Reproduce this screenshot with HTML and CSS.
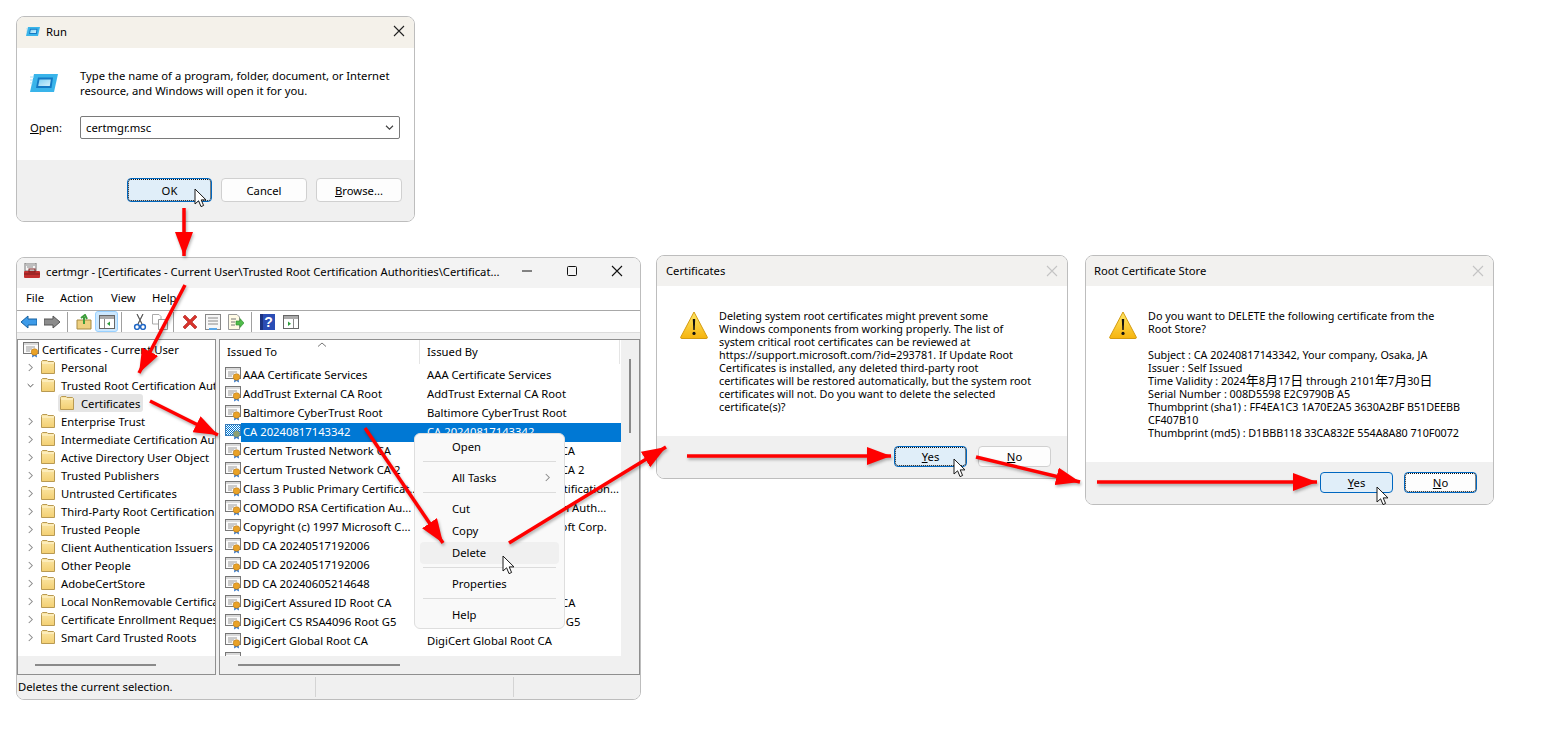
FILE: index.html
```html
<!DOCTYPE html>
<html lang="en">
<head>
<meta charset="utf-8">
<title>Deleting a root certificate</title>
<link rel="stylesheet" href="styles.css">
</head>
<body>
<svg class="defs" width="0" height="0" aria-hidden="true">
  <defs>
    <linearGradient id="folderFill" x1="0" y1="0" x2="0" y2="1"><stop offset="0" stop-color="#fbe7a6"/><stop offset="1" stop-color="#f3cf72"/></linearGradient>
    <linearGradient id="warnFill" x1="0" y1="0" x2="0" y2="1"><stop offset="0" stop-color="#ffe766"/><stop offset="1" stop-color="#f6b40e"/></linearGradient>
    <linearGradient id="runInner" x1="0" y1="0" x2="1" y2="1"><stop offset="0" stop-color="#7fd0f4"/><stop offset="1" stop-color="#d4f0fb"/></linearGradient>
    <symbol id="folder" viewBox="0 0 14 14">
      <path d="M.5 2.5V1.5L1.5.5H6L7 1.5H12.5L13.5 2.5V13.5H.5Z" fill="url(#folderFill)" stroke="#b99a52"/>
      <path d="M1 3H13" stroke="#fff6d8"/>
    </symbol>
    <symbol id="cert" viewBox="0 0 17 17">
      <rect x=".5" y="1.5" width="15" height="11" fill="#fbfbfb" stroke="#777"/>
      <rect x="1" y="2" width="14" height="2" fill="#d9d9d9"/>
      <path d="M3 6H12M3 8H9M3 10H7" stroke="#9a9a9a"/>
      <path d="M9.5 13L9 16.5L11.5 15L14 16.5L13.5 13Z" fill="#2f74c9"/>
      <circle cx="11.5" cy="11" r="3.3" fill="#e9a227" stroke="#b9791a" stroke-width=".6"/>
    </symbol>
    <pattern id="dither" width="2" height="2" patternUnits="userSpaceOnUse"><rect width="2" height="2" fill="#fff"/><rect width="1" height="1" fill="#0078d4"/><rect x="1" y="1" width="1" height="1" fill="#0078d4"/></pattern>
    <symbol id="certSel" viewBox="0 0 17 17">
      <rect x=".5" y="1.5" width="15" height="11" fill="url(#dither)" stroke="#3a7cb8"/>
      <path d="M9.5 13L9 16.5L11.5 15L14 16.5L13.5 13Z" fill="#2f74c9"/>
      <circle cx="11.5" cy="11" r="3.3" fill="#8ea070" stroke="#4a80a0" stroke-width=".6"/>
    </symbol>
    <symbol id="chev" viewBox="0 0 8 10"><path d="M2 1L6 5L2 9" fill="none" stroke="#8a8a8a" stroke-width="1.2"/></symbol>
    <symbol id="chevDown" viewBox="0 0 10 8"><path d="M1 2L5 6L9 2" fill="none" stroke="#404040" stroke-width="1.3"/></symbol>
    <symbol id="runIcon" viewBox="0 0 28 18">
      <path d="M4 0H28L24 18H0Z" fill="#39b4ea"/>
      <path d="M8 3.5H23L21.5 14H6Z" fill="#1379c4"/>
      <path d="M9.5 5.5H20.8L19.8 12H8.2Z" fill="url(#runInner)"/>
      <path d="M0 3H4M0 6H3M0 9H2.5" stroke="#a9def5"/>
    </symbol>
    <symbol id="warn" viewBox="0 0 28 28">
      <path d="M14 1L27.3 26.2Q27.6 27.5 26 27.5H2Q.4 27.5 .7 26.2Z" fill="url(#warnFill)" stroke="#d49b10"/>
      <path d="M12.8 8H15.2L14.7 19H13.3Z" fill="#111"/><circle cx="14" cy="22.4" r="1.6" fill="#111"/>
    </symbol>
    <symbol id="pointer" viewBox="0 0 13 20">
      <path d="M1 1V16L4.6 12.8L7 18.6L9.6 17.5L7.2 11.9H12Z" fill="#fff" stroke="#1a1a1a" stroke-width="1" stroke-linejoin="round"/>
    </symbol>
    <symbol id="x" viewBox="0 0 12 12"><path d="M1 1L11 11M11 1L1 11" fill="none" stroke="currentColor" stroke-width="1.1"/></symbol>
    <marker id="head" viewBox="0 0 24 18" refX="24" refY="9" markerUnits="userSpaceOnUse" markerWidth="24" markerHeight="18" orient="auto"><path d="M0 0L24 9L0 18Z" fill="#f00"/></marker>
  </defs>
</svg>

<main class="desktop">

  <section class="win win-run">
    <header class="title title-run">
      <svg class="title-icon-run"><use href="#runIcon"/></svg>
      <span class="title-text">Run</span>
      <svg class="close close-dark"><use href="#x"/></svg>
    </header>
    <div class="run-body">
      <div class="run-msg">
        <svg class="run-icon"><use href="#runIcon"/></svg>
        <p class="run-text">Type the name of a program, folder, document, or Internet<br>resource, and Windows will open it for you.</p>
      </div>
      <div class="run-open">
        <span class="run-label"><u>O</u>pen:</span>
        <div class="combo"><span>certmgr.msc</span><svg class="combo-arrow"><use href="#chevDown"/></svg></div>
      </div>
    </div>
    <footer class="foot foot-run">
      <button class="btn btn-run btn-focus">OK</button>
      <button class="btn btn-run">Cancel</button>
      <button class="btn btn-run"><u>B</u>rowse...</button>
    </footer>
  </section>

  <section class="win win-mmc">
    <header class="title title-mmc">
      <svg class="mmc-icon" viewBox="0 0 16 16">
        <rect x="1" y="0" width="11" height="8" fill="#f4f4f4" stroke="#777"/><path d="M2 2H11M3 4H9" stroke="#888"/>
        <rect x="0" y="8" width="16" height="7" rx="1" fill="#c22f2f"/><rect x="5" y="6" width="6" height="3" fill="none" stroke="#7a1f1f"/><path d="M0 11H16" stroke="#7a1f1f"/>
      </svg>
      <span class="title-text title-grow">certmgr - [Certificates - Current User\Trusted Root Certification Authorities\Certificat...</span>
      <span class="caption">
        <svg class="cap-btn" viewBox="0 0 12 12"><path d="M1 6H11" stroke="#111"/></svg>
        <svg class="cap-btn" viewBox="0 0 12 12"><rect x="1.5" y="1.5" width="9" height="9" rx="1" fill="none" stroke="#111"/></svg>
        <svg class="cap-btn"><use href="#x"/></svg>
      </span>
    </header>
    <nav class="menu"><span>File</span><span>Action</span><span>View</span><span>Help</span></nav>
    <div class="toolbar">
      <svg class="tb" viewBox="0 0 16 16"><path d="M0 8L7 2V5H16V11H7V14Z" fill="#3d9be9" stroke="#17609f"/></svg>
      <svg class="tb" viewBox="0 0 16 16"><path d="M16 8L9 2V5H0V11H9V14Z" fill="#8c8c8c" stroke="#555"/></svg>
      <i class="tb-sep"></i>
      <svg class="tb" viewBox="0 0 16 16"><path d="M1 6H15V15H1Z" fill="#eed080" stroke="#a88b43"/><path d="M8 10V3M5 4L9 1L11 5" fill="none" stroke="#3d9c3a" stroke-width="2"/></svg>
      <span class="tb-active"><svg class="tb-in" viewBox="0 0 16 16"><rect x=".5" y="1.5" width="15" height="13" fill="#fff" stroke="#666"/><rect x="1" y="2" width="14" height="3" fill="#aaa"/><path d="M5.5 5V14" stroke="#888"/><path d="M11 7.5V12L8 9.7Z" fill="#2e9c3c"/></svg></span>
      <i class="tb-sep"></i>
      <svg class="tb tb-cut" viewBox="0 0 16 16"><path d="M11 0L6 10M5 0L10 10" stroke="#555" fill="none" stroke-width="1.2"/><circle cx="5" cy="13" r="2.4" fill="none" stroke="#1f66c4" stroke-width="1.5"/><circle cx="11" cy="13" r="2.4" fill="none" stroke="#1f66c4" stroke-width="1.5"/></svg>
      <svg class="tb tb-copy" viewBox="0 0 16 16"><path d="M.5.5H7L9 2.5V10H.5Z" fill="#fff" stroke="#aaa"/><path d="M6.5 5.5H13L15.5 8V15.5H6.5Z" fill="#fff" stroke="#999"/></svg>
      <i class="tb-sep"></i>
      <svg class="tb tb-del" viewBox="0 0 16 16"><path d="M1 3L3 1L8 6L13 1L15 3L10 8L15 13L13 15L8 10L3 15L1 13L6 8Z" fill="#d8322b" stroke="#a82520" stroke-width=".6"/></svg>
      <svg class="tb tb-props" viewBox="0 0 16 16"><rect x=".5" y=".5" width="15" height="15" fill="#f7f7f7" stroke="#888"/><path d="M3 4H13M3 7H13M3 10H13" stroke="#888"/><path d="M4 15H12" stroke="#5aa7e8" stroke-width="2"/></svg>
      <svg class="tb tb-export" viewBox="0 0 16 16"><path d="M.5.5H9L11.5 3V15.5H.5Z" fill="#fffbe6" stroke="#999"/><path d="M3 5H8M3 8H7M3 11H7" stroke="#777"/><path d="M8 7H12V4.5L16 9L12 13.5V11H8Z" fill="#4fbb4a" stroke="#2b8c2b" stroke-width=".6"/></svg>
      <i class="tb-sep"></i>
      <svg class="tb tb-help" viewBox="0 0 16 16"><rect width="15" height="16" fill="#2a4db5"/><rect x="0" width="3" height="16" fill="#1c3380"/><text x="8.5" y="13" class="tb-q">?</text></svg>
      <svg class="tb tb-view" viewBox="0 0 16 16"><rect x=".5" y="1.5" width="15" height="13" fill="#fff" stroke="#666"/><rect x="1" y="2" width="14" height="3" fill="#aaa"/><path d="M10.5 5V14" stroke="#888"/><path d="M5 7.5V12L8 9.7Z" fill="#2e9c3c"/></svg>
    </div>
    <div class="panes">
      <div class="pane pane-tree">
        <div class="tree">
          <div class="row-t row-root"><svg class="cert-ico"><use href="#cert"/></svg><span>Certificates - Current User</span></div>
          <div class="row-t"><svg class="ex"><use href="#chev"/></svg><svg class="fo"><use href="#folder"/></svg><span>Personal</span></div>
          <div class="row-t"><svg class="ex"><use href="#chevDown"/></svg><svg class="fo"><use href="#folder"/></svg><span>Trusted Root Certification Authorities</span></div>
          <div class="row-t row-sub"><span class="row-sel"><svg class="fo"><use href="#folder"/></svg><span>Certificates</span></span></div>
          <div class="row-t"><svg class="ex"><use href="#chev"/></svg><svg class="fo"><use href="#folder"/></svg><span>Enterprise Trust</span></div>
          <div class="row-t"><svg class="ex"><use href="#chev"/></svg><svg class="fo"><use href="#folder"/></svg><span>Intermediate Certification Authorities</span></div>
          <div class="row-t"><svg class="ex"><use href="#chev"/></svg><svg class="fo"><use href="#folder"/></svg><span>Active Directory User Object</span></div>
          <div class="row-t"><svg class="ex"><use href="#chev"/></svg><svg class="fo"><use href="#folder"/></svg><span>Trusted Publishers</span></div>
          <div class="row-t"><svg class="ex"><use href="#chev"/></svg><svg class="fo"><use href="#folder"/></svg><span>Untrusted Certificates</span></div>
          <div class="row-t"><svg class="ex"><use href="#chev"/></svg><svg class="fo"><use href="#folder"/></svg><span>Third-Party Root Certification Authorities</span></div>
          <div class="row-t"><svg class="ex"><use href="#chev"/></svg><svg class="fo"><use href="#folder"/></svg><span>Trusted People</span></div>
          <div class="row-t"><svg class="ex"><use href="#chev"/></svg><svg class="fo"><use href="#folder"/></svg><span>Client Authentication Issuers</span></div>
          <div class="row-t"><svg class="ex"><use href="#chev"/></svg><svg class="fo"><use href="#folder"/></svg><span>Other People</span></div>
          <div class="row-t"><svg class="ex"><use href="#chev"/></svg><svg class="fo"><use href="#folder"/></svg><span>AdobeCertStore</span></div>
          <div class="row-t"><svg class="ex"><use href="#chev"/></svg><svg class="fo"><use href="#folder"/></svg><span>Local NonRemovable Certificates</span></div>
          <div class="row-t"><svg class="ex"><use href="#chev"/></svg><svg class="fo"><use href="#folder"/></svg><span>Certificate Enrollment Requests</span></div>
          <div class="row-t"><svg class="ex"><use href="#chev"/></svg><svg class="fo"><use href="#folder"/></svg><span>Smart Card Trusted Roots</span></div>
        </div>
        <div class="hscroll"><i class="thumb thumb-tree"></i></div>
      </div>
      <div class="pane pane-list">
        <div class="list-main">
          <div class="list-area">
            <div class="list-head"><span class="col-a">Issued To</span><span class="col-b">Issued By</span><svg class="sort" viewBox="0 0 10 5"><path d="M1 4.5L5 1L9 4.5" fill="none" stroke="#777"/></svg></div>
            <div class="rows">
              <div class="row-l"><svg class="ci"><use href="#cert"/></svg><span class="c1">AAA Certificate Services</span><span class="c2">AAA Certificate Services</span></div>
              <div class="row-l"><svg class="ci"><use href="#cert"/></svg><span class="c1">AddTrust External CA Root</span><span class="c2">AddTrust External CA Root</span></div>
              <div class="row-l"><svg class="ci"><use href="#cert"/></svg><span class="c1">Baltimore CyberTrust Root</span><span class="c2">Baltimore CyberTrust Root</span></div>
              <div class="row-l row-on"><svg class="ci"><use href="#certSel"/></svg><span class="c1">CA 20240817143342</span><span class="c2">CA 20240817143342</span></div>
              <div class="row-l"><svg class="ci"><use href="#cert"/></svg><span class="c1">Certum Trusted Network CA</span><span class="c2">Certum Trusted Network CA</span></div>
              <div class="row-l"><svg class="ci"><use href="#cert"/></svg><span class="c1">Certum Trusted Network CA 2</span><span class="c2">Certum Trusted Network CA 2</span></div>
              <div class="row-l"><svg class="ci"><use href="#cert"/></svg><span class="c1">Class 3 Public Primary Certificat...</span><span class="c2">Class 3 Public Primary Certification...</span></div>
              <div class="row-l"><svg class="ci"><use href="#cert"/></svg><span class="c1">COMODO RSA Certification Au...</span><span class="c2">COMODO RSA Certification Auth...</span></div>
              <div class="row-l"><svg class="ci"><use href="#cert"/></svg><span class="c1">Copyright (c) 1997 Microsoft C...</span><span class="c2">Copyright (c) 1997 Microsoft Corp.</span></div>
              <div class="row-l"><svg class="ci"><use href="#cert"/></svg><span class="c1">DD CA 20240517192006</span><span class="c2">DD CA 20240517192006</span></div>
              <div class="row-l"><svg class="ci"><use href="#cert"/></svg><span class="c1">DD CA 20240517192006</span><span class="c2">DD CA 20240517192006</span></div>
              <div class="row-l"><svg class="ci"><use href="#cert"/></svg><span class="c1">DD CA 20240605214648</span><span class="c2">DD CA 20240605214648</span></div>
              <div class="row-l"><svg class="ci"><use href="#cert"/></svg><span class="c1">DigiCert Assured ID Root CA</span><span class="c2">DigiCert Assured ID Root CA</span></div>
              <div class="row-l"><svg class="ci"><use href="#cert"/></svg><span class="c1">DigiCert CS RSA4096 Root G5</span><span class="c2">DigiCert CS RSA4096 Root G5</span></div>
              <div class="row-l"><svg class="ci"><use href="#cert"/></svg><span class="c1">DigiCert Global Root CA</span><span class="c2">DigiCert Global Root CA</span></div>
              <div class="row-l"><svg class="ci"><use href="#cert"/></svg><span class="c1">DigiCert Global Root G2</span><span class="c2">DigiCert Global Root G2</span></div>
            </div>
          </div>
          <div class="vscroll"><i class="thumb-v"></i></div>
        </div>
        <div class="hscroll"><i class="thumb thumb-list"></i></div>
      </div>
    </div>
    <footer class="status"><span class="st st1">Deletes the current selection.</span><span class="st st2"></span><span class="st st3"></span></footer>
  </section>

  <div class="ctx" role="menu">
    <div class="ctx-item">Open</div>
    <hr class="ctx-sep">
    <div class="ctx-item ctx-sub">All Tasks<svg class="ctx-chev"><use href="#chev"/></svg></div>
    <hr class="ctx-sep">
    <div class="ctx-item ctx-mid">Cut</div>
    <div class="ctx-item ctx-mid">Copy</div>
    <div class="ctx-item ctx-mid ctx-hover">Delete</div>
    <hr class="ctx-sep">
    <div class="ctx-item">Properties</div>
    <hr class="ctx-sep">
    <div class="ctx-item">Help</div>
  </div>

  <section class="win win-cert">
    <header class="title title-dlg"><span class="title-text">Certificates</span><svg class="close close-off"><use href="#x"/></svg></header>
    <div class="dlg-body">
      <svg class="warn"><use href="#warn"/></svg>
      <p class="dlg-text">Deleting system root certificates might prevent some<br>Windows components from working properly. The list of<br>system critical root certificates can be reviewed at<br>https://support.microsoft.com/?id=293781. If Update Root<br>Certificates is installed, any deleted third-party root<br>certificates will be restored automatically, but the system root<br>certificates will not. Do you want to delete the selected<br>certificate(s)?</p>
    </div>
    <footer class="foot foot-dlg">
      <button class="btn btn-dlg btn-focus"><u>Y</u>es</button>
      <button class="btn btn-dlg"><u>N</u>o</button>
    </footer>
  </section>

  <section class="win win-root">
    <header class="title title-dlg title-root"><span class="title-text">Root Certificate Store</span><svg class="close close-off"><use href="#x"/></svg></header>
    <div class="dlg-body">
      <svg class="warn"><use href="#warn"/></svg>
      <p class="dlg-text">Do you want to DELETE the following certificate from the<br>Root Store?<br><br>Subject : CA 20240817143342, Your company, Osaka, JA<br>Issuer : Self Issued<br>Time Validity : 2024<span class="cjk">年</span>8<span class="cjk">月</span>17<span class="cjk">日</span> through 2101<span class="cjk">年</span>7<span class="cjk">月</span>30<span class="cjk">日</span><br>Serial Number : 008D5598 E2C9790B A5<br><span class="hash">Thumbprint (sha1) : FF4EA1C3 1A70E2A5 3630A2BF B51DEEBB</span><br>CF407B10<br><span class="hash">Thumbprint (md5) : D1BBB118 33CA832E 554A8A80 710F0072</span></p>
    </div>
    <footer class="foot foot-dlg foot-root">
      <button class="btn btn-dlg btn-blue"><u>Y</u>es</button>
      <button class="btn btn-dlg btn-dotted"><u>N</u>o</button>
    </footer>
  </section>

  <svg class="arrows" viewBox="0 0 1553 729" aria-hidden="true">
    <g class="arrow-lines">
      <path d="M184 208V256"/>
      <path d="M185 285L139 373"/>
      <path d="M150 401L218 435"/>
      <path d="M365 428L443 543"/>
      <path d="M509 543L666 447"/>
      <path d="M687 456H891"/>
      <path d="M976 457L1080 482"/>
      <path d="M1097 482H1317"/>
    </g>
    <use href="#pointer" x="194" y="188" width="13" height="20"/>
    <use href="#pointer" x="502" y="555" width="13" height="20"/>
    <use href="#pointer" x="953" y="458" width="13" height="20"/>
    <use href="#pointer" x="1376" y="486" width="13" height="20"/>
  </svg>
</main>
</body>
</html>
```
FILE: styles.css
```css
* { box-sizing: border-box; }
html, body { margin: 0; background: #fff; }
body {
  font-family: "Noto Sans", "Noto Sans CJK JP", sans-serif;
  font-size: 11.25px;
  color: #000;
}
.defs { position: absolute; }
.desktop { position: relative; width: 1553px; height: 729px; overflow: hidden; }
p { margin: 0; }

/* windows on the canvas */
.win {
  position: absolute;
  display: flex;
  flex-direction: column;
  background: #fff;
  border: 1px solid #bdbdbd;
  border-radius: 8px;
  overflow: hidden;
}
.win-run { left: 16px; top: 16px; width: 399px; height: 206px; }
.win-mmc { left: 16px; top: 257px; width: 625px; height: 443px; }
.win-cert { left: 656px; top: 255px; width: 412px; height: 224px; }
.win-root { left: 1085px; top: 255px; width: 409px; height: 250px; }

/* title bars */
.title { display: flex; align-items: center; flex: none; }
.title-text { white-space: nowrap; }
.title-run { height: 31px; background: #f4f1ea; padding: 0 9px 3px 9px; }
.title-icon-run { width: 14px; height: 9px; margin-right: 6px; }
.title-run .title-text { flex: 1; }
.close { width: 12px; height: 12px; }
.close-dark { color: #222; }
.close-off { color: #c4c4c4; margin-left: auto; }
.title-dlg { height: 30px; background: #f2f1ef; padding: 0 9px 1px; }
.title-root { padding-left: 8px; }
.title-dlg .title-text { flex: 1; }
.title-mmc { height: 30px; background: #f3f3f3; padding: 0 17px 4px 7px; }
.mmc-icon { width: 16px; height: 16px; margin-right: 6px; flex: none; }
.title-grow { flex: 1; overflow: hidden; }
.caption { display: flex; gap: 33px; align-items: center; }
.cap-btn { width: 12px; height: 12px; color: #111; }

/* run dialog */
.run-body { flex: 1; padding: 19px 14px 0 13px; }
.run-msg { display: flex; align-items: flex-start; height: 49px; }
.run-icon { width: 28px; height: 18px; margin: 7px 22px 0 0; flex: none; }
.run-text { line-height: 15px; padding-top: 1px; }
.run-open { display: flex; align-items: center; }
.run-label { width: 50px; }
.combo {
  display: flex; align-items: center; justify-content: space-between;
  flex: 1; height: 23px; padding: 0 5px;
  border: 1px solid #7a7a7a; border-radius: 2px;
}
.combo-arrow { width: 9px; height: 7px; }
.foot { display: flex; justify-content: flex-end; background: #f0f0f0; flex: none; }
.foot-run { height: 61px; gap: 9px; padding: 18px 12px 0 0; }
.btn {
  font: inherit; color: #000; background: #fdfdfd;
  border: 1px solid #d0d0d0; border-radius: 4px; padding: 0;
}
.btn-run { width: 86px; height: 24px; }
.btn-run.btn-focus { width: 85px; }
.btn-focus { background: #e0eef9; border: 1px solid #0067c0; outline: 1px dotted #111; outline-offset: -2px; }
.btn-blue { background: #e0eef9; border-color: #0067c0; }
.btn-dotted { border-color: #0067c0; outline: 1px dotted #111; outline-offset: -2px; }

/* mmc */
.menu { display: flex; height: 23px; flex: none; align-items: center; border-bottom: 1px solid #a8a8a8; padding: 0 0 3px 9px; }
.menu span:nth-child(1) { width: 34px; }
.menu span:nth-child(2) { width: 51px; }
.menu span:nth-child(3) { width: 41px; }
.toolbar { display: flex; align-items: center; height: 22px; flex: none; border-bottom: 1px solid #dcdcdc; padding-left: 4px; }
.tb { width: 16px; height: 16px; margin-right: 7px; flex: none; }
.tb-sep { width: 1px; height: 20px; background: #a0a0a0; margin: 0 8px 0 0; flex: none; }
.tb-active { display: flex; align-items: center; justify-content: center; width: 23px; height: 21px; background: #cce8ff; border: 1px solid #99d1ff; border-radius: 3px; margin: 0 3px 0 -4px; flex: none; }
.tb-in { width: 16px; height: 16px; }
.tb-cut { margin: 0 4px 0 2px; }
.tb-copy { margin-right: 5px; }
.tb-q { font: bold 14px "Liberation Sans", sans-serif; fill: #fff; text-anchor: middle; }
.panes { display: flex; flex: 1; min-height: 0; gap: 3px; background: #f0f0f0; padding-top: 6px; }
.pane { display: flex; flex-direction: column; border: 1px solid #8f8f8f; background: #fff; overflow: hidden; }
.pane-tree { width: 199px; flex: none; }
.pane-list { flex: 1; }
.tree { flex: 1; min-height: 0; overflow: hidden; }
.row-t { display: flex; align-items: center; height: 18px; white-space: nowrap; padding-left: 9px; }
.row-root { padding-left: 5px; }
.cert-ico { width: 17px; height: 17px; margin-right: 2px; flex: none; }
.ex { width: 7px; height: 9px; margin-right: 7px; flex: none; }
.fo { width: 14px; height: 14px; margin-right: 6px; flex: none; }
.row-sub { padding-left: 40px; }
.row-sel { display: flex; align-items: center; height: 18px; padding: 0 3px 0 2px; background: #e5e5e5; border-radius: 3px; }
.row-sel .fo { margin-right: 7px; }
.hscroll { height: 18px; flex: none; background: #f0f0f0; display: flex; align-items: center; }
.thumb { display: block; height: 2px; background: #8a8a8a; }
.thumb-tree { width: 121px; margin-left: 17px; }
.thumb-list { width: 162px; margin-left: 18px; }
.list-main { display: flex; flex: 1; min-height: 0; }
.list-area { width: 401px; flex: none; overflow: hidden; }
.list-head { position: relative; display: flex; height: 26px; align-items: flex-start; }
.col-a { width: 200px; padding-left: 7px; border-right: 1px solid #e5e5e5; height: 24px; line-height: 24px; }
.col-b { width: 200px; padding-left: 7px; border-right: 1px solid #e5e5e5; height: 24px; line-height: 24px; }
.sort { position: absolute; left: 97px; top: 2px; width: 10px; height: 5px; }
.row-l { display: flex; align-items: center; height: 19px; white-space: nowrap; padding: 0 0 2px 5px; }
.ci { width: 17px; height: 17px; flex: none; }
.c1 { width: 185px; flex: none; overflow: hidden; padding-left: 1px; }
.c2 { flex: none; }
.row-on { background: linear-gradient(to right, #fff 21px, #0078d4 21px); color: #fff; }
.vscroll { flex: 1; background: #f0f0f0; position: relative; display: flex; justify-content: center; padding: 19px 1px 0 0; }
.thumb-v { display: block; width: 2px; height: 74px; background: #8a8a8a; }
.status { display: flex; height: 24px; flex: none; background: #f0f0f0; align-items: center; padding-left: 1px; }
.st { height: 20px; line-height: 20px; border-right: 1px solid #d4d4d4; }
.st1 { width: 298px; }
.st2 { width: 198px; }
.st3 { flex: 1; border-right: 0; }

/* context menu floats over the list */
.ctx {
  position: absolute; left: 414px; top: 433px; width: 151px; height: 196px;
  display: flex; flex-direction: column;
  background: #f9f9f9; border: 1px solid #dedede; border-radius: 6px; padding: 2px 5px;
}
.ctx-item { position: relative; height: 21px; line-height: 21px; padding-left: 32px; flex: none; }
.ctx-sep { width: 133px; height: 1px; margin: 4px 0 5px 3px; border: 0; background: #dcdcdc; flex: none; }
.ctx-sub { display: flex; align-items: center; justify-content: space-between; padding-right: 8px; margin-bottom: -.5px; }
.ctx-chev { width: 7px; height: 9px; }
.ctx-mid { height: 22px; line-height: 22px; }
.ctx-hover { background: #f0f0f0; border-radius: 4px; margin-bottom: -.5px; }

/* message dialogs */
.dlg-body { display: flex; flex: 1; padding: 23px 20px 0 23px; }
.warn { width: 28px; height: 28px; flex: none; margin: 2px 11px 0 0; }
.dlg-text { line-height: 13px; font-size: 10.8px; white-space: nowrap; }
.cjk { font-size: 13px; line-height: 13px; }
.hash { letter-spacing: -.05px; }
.foot-dlg { height: 42px; gap: 11px; padding: 10px 16px 0 0; }
.btn-dlg { width: 73px; height: 21px; }

/* hand-drawn arrows lie over everything */
.arrows { position: absolute; left: 0; top: 0; width: 1553px; height: 729px; pointer-events: none; }
.arrow-lines { filter: drop-shadow(1px 2px 1.5px rgba(0,0,0,.3)); }
.arrow-lines path { fill: none; stroke: #f00; stroke-width: 3.5px; marker-end: url(#head); }
```
